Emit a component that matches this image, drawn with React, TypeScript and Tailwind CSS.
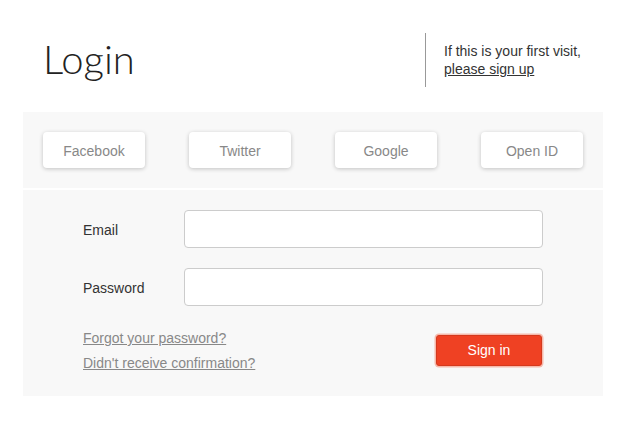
import React from "react";

export default function App() {
  const social = ["Facebook", "Twitter", "Google", "Open ID"];
  return (
    <div className="w-[630px] h-[440px] bg-white" style={{ fontFamily: '"Liberation Sans", Arial, sans-serif' }}>
      <div className="ml-[23px] w-[580px]">
        <div className="h-[112px] pt-2 flex items-center">
          <div className="flex-1 pl-5 pb-[3px]">
            <h1 className="text-[40px] leading-none font-light text-[#222]" style={{ fontFamily: 'Lato, "Open Sans", sans-serif' }}>
              Login
            </h1>
          </div>
          <div className="w-[178px] h-[54px] border-l border-[#999] pl-[18px] flex flex-col justify-center text-[14px] leading-[18px] text-[#333]">
            <span>If this is your first visit,</span>
            <a href="#" className="underline text-[#333] w-fit">please sign up</a>
          </div>
        </div>
        <div className="bg-[#f8f8f8] h-[76px] px-5 flex items-center justify-between">
          {social.map((s) => (
            <button
              key={s}
              className="w-[102px] h-[36px] pt-[2px] bg-white rounded-[4px] shadow-[0_1px_4px_rgba(0,0,0,0.22)] text-[14px] text-[#888]"
            >
              {s}
            </button>
          ))}
        </div>
        <div className="mt-[2px] bg-[#f8f8f8] px-[60px] pt-5 pb-[24px]">
          <div className="flex flex-col gap-5">
            <div className="flex items-center">
              <label className="w-[101px] pt-[2px] text-[14px] text-[#333]">Email</label>
              <input className="flex-1 h-[38px] bg-white border border-[#ccc] rounded-[4px]" />
            </div>
            <div className="flex items-center">
              <label className="w-[101px] pt-[2px] text-[14px] text-[#333]">Password</label>
              <input type="password" className="flex-1 h-[38px] bg-white border border-[#ccc] rounded-[4px]" />
            </div>
          </div>
          <div className="mt-[24px] flex items-start justify-between">
            <div className="flex flex-col gap-[8px] text-[14px] leading-[17px] text-[#888]">
              <a href="#" className="underline">Forgot your password?</a>
              <a href="#" className="underline">Didn't receive confirmation?</a>
            </div>
            <button className="mt-[5px] w-[106px] h-[31px] bg-[#ef4123] border border-[#d4391d] rounded-[3px] ring-[1.5px] ring-[#f6b9ac] text-white text-[14px] mr-[1px]">
              Sign in
            </button>
          </div>
        </div>
      </div>
    </div>
  );
}
